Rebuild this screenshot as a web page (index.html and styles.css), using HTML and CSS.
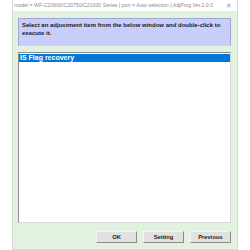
FILE: index.html
```html
<!DOCTYPE html>
<html lang="en">
<head>
    <meta charset="UTF-8">
    <title>AdjProg</title>
    <link rel="stylesheet" href="styles.css">
</head>
<body>
    <div class="window">
        <div class="titlebar">
            <span class="title">model = WF-C20600/C20750/C21000 Series | port = Auto selection | AdjProg Ver.1.0.0</span>
            <span class="close">&#x2715;</span>
        </div>
        <div class="content">
            <div class="info">Select an adjustment item from the below window and double-click to<br>execute it.</div>
            <div class="list">
                <div class="item selected">IS Flag recovery</div>
            </div>
            <div class="buttons">
                <button class="btn">OK</button>
                <button class="btn">Setting</button>
                <button class="btn">Previous</button>
            </div>
        </div>
    </div>
</body>
</html>
```

FILE: styles.css
```css
body {
    margin: 0;
    background: #fff;
    font-family: "Liberation Sans", Arial, sans-serif;
}
.window {
    margin-left: 12px;
    width: 226px;
    height: 250px;
    box-sizing: border-box;
    border: 1px solid #cfdccf;
    border-top: 0;
    background: #e3f1e1;
    display: flex;
    flex-direction: column;
    overflow: hidden;
}
.titlebar {
    flex: none;
    height: 11px;
    line-height: 11px;
    background: #fff;
    display: flex;
    justify-content: space-between;
    padding: 0 5px 0 1px;
    color: #8a8a8a;
    overflow: hidden;
}
.title {
    font-size: 5.2px;
    white-space: nowrap;
}
.close {
    font-size: 6.5px;
    color: #999;
}
.content {
    flex: 1;
    display: flex;
    flex-direction: column;
    padding: 7px 6px 6px 5px;
}
.info {
    height: 28px;
    box-sizing: border-box;
    background: #c9cdf9;
    border: 1px solid #a0a6d6;
    border-bottom-color: #c9cdf9;
    padding: 2px 3px;
    font-size: 6px;
    font-weight: bold;
    line-height: 8px;
    white-space: nowrap;
    color: #1a1a1a;
}
.list {
    margin-top: 6px;
    flex: 1;
    background: #fff;
    border: 1px solid #8c8c8c;
    border-right-color: #d8d8d8;
    border-bottom-color: #d8d8d8;
    padding-top: 1px;
}
.item {
    height: 8px;
    line-height: 8px;
    font-size: 7px;
    font-weight: bold;
    padding-left: 1px;
}
.item.selected {
    background: #0078d7;
    color: #fff;
}
.buttons {
    margin-top: 8px;
    display: flex;
    justify-content: flex-end;
    gap: 6px;
}
.btn {
    width: 41px;
    height: 12px;
    padding: 0;
    background: #e1e1e1;
    border: 1px solid #f4f4f4;
    border-right-color: #8a8a8a;
    border-bottom-color: #8a8a8a;
    font-family: "Liberation Sans", Arial, sans-serif;
    font-size: 5.8px;
    font-weight: bold;
    color: #222;
}
```
